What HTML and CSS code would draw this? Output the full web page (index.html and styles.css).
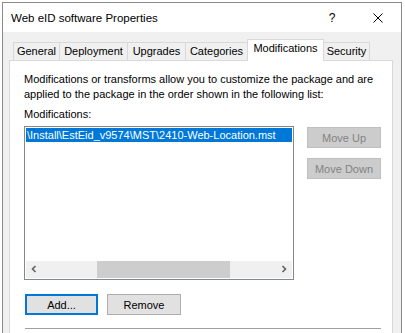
FILE: index.html
```html
<!DOCTYPE html>
<html>
<head>
<meta charset="utf-8">
<link rel="stylesheet" href="styles.css">
</head>
<body>
<div class="window">
  <div class="titlebar">
    <span class="title">Web eID software Properties</span>
    <span class="capbtn help">?</span>
    <span class="capbtn close"><svg width="10" height="10" viewBox="0 0 10 10"><path d="M0.5 0.5 L9.5 9.5 M9.5 0.5 L0.5 9.5" stroke="#000" stroke-width="1" fill="none"/></svg></span>
  </div>
  <div class="client">
    <div class="tabs">
      <div class="tab t-general">General</div>
      <div class="tab t-deploy">Deployment</div>
      <div class="tab t-upgr">Upgrades</div>
      <div class="tab t-cat">Categories</div>
      <div class="tab selected t-mod">Modifications</div>
      <div class="tab t-sec">Security</div>
    </div>
    <div class="panel">
      <p class="desc">Modifications or transforms allow you to customize the package and are<br>applied to the package in the order shown in the following list:</p>
      <div class="label">Modifications:</div>
      <div class="listrow">
        <div class="listbox">
          <div class="items">
            <div class="item selected">\Install\EstEid_v9574\MST\2410-Web-Location.mst</div>
          </div>
          <div class="hscroll">
            <div class="arrow"><svg width="17" height="17" viewBox="0 0 17 17"><polyline points="9.5,5 6.5,8 9.5,11" stroke="#606060" stroke-width="1.6" fill="none"/></svg></div>
            <div class="track"><div class="thumb"></div></div>
            <div class="arrow"><svg width="17" height="17" viewBox="0 0 17 17"><polyline points="7.5,5 10.5,8 7.5,11" stroke="#606060" stroke-width="1.6" fill="none"/></svg></div>
          </div>
        </div>
        <div class="sidebtns">
          <button class="btn disabled" disabled>Move Up</button>
          <button class="btn disabled second" disabled>Move Down</button>
        </div>
      </div>
      <div class="btnrow">
        <button class="btn default">Add...</button>
        <button class="btn remove">Remove</button>
      </div>
      <div class="sep"></div>
    </div>
  </div>
</div>
</body>
</html>
```

FILE: styles.css
```css
html, body {
  margin: 0;
  padding: 0;
  background: #ffffff;
  overflow: hidden;
}
body {
  font-family: "Liberation Sans", Arial, sans-serif;
  font-size: 11px;
  color: #000;
}
.window {
  margin: 2px 0 0 2px;
  width: 400px;
  height: 340px;
  box-sizing: border-box;
  border: 1px solid #8a8a8a;
  border-bottom: none;
  background: #f0f0f0;
}
.titlebar {
  height: 29px;
  background: #ffffff;
  display: flex;
  align-items: center;
}
.title {
  padding-left: 8px;
  font-size: 11.5px;
  flex: 1;
}
.capbtn {
  width: 46px;
  height: 29px;
  display: flex;
  align-items: center;
  justify-content: center;
  font-size: 12px;
}
.client {
  padding: 7px 8px 0 6px;
}
.tabs {
  display: flex;
  align-items: flex-end;
  height: 21px;
  padding-left: 4px;
  position: relative;
  z-index: 2;
}
.tab {
  box-sizing: border-box;
  height: 18px;
  border-top: 1px solid #d9d9d9;
  border-left: 1px solid #d9d9d9;
  background: #f0f0f0;
  padding-top: 2px;
  line-height: 13px;
  text-align: center;
  white-space: nowrap;
}
.t-general { width: 46px; }
.t-deploy { width: 68px; }
.t-upgr { width: 58px; }
.t-cat { width: 62px; }
.t-mod { width: 77px; }
.t-sec { width: 46px; border-left: none; border-right: 1px solid #d9d9d9; }
.tab.selected {
  height: 22px;
  margin-bottom: -1px;
  background: #ffffff;
  border-right: 1px solid #d9d9d9;
  padding-top: 2px;
}
.panel {
  box-sizing: border-box;
  width: 384px;
  height: 320px;
  background: #ffffff;
  border: 1px solid #d9d9d9;
  padding: 11px 0 0 14px;
}
.desc {
  margin: 0;
  line-height: 15px;
}
.label {
  margin-top: 5px;
  line-height: 15px;
}
.listrow {
  margin-top: 4px;
  display: flex;
  align-items: flex-start;
}
.listbox {
  box-sizing: border-box;
  width: 270px;
  height: 154px;
  border: 1px solid #828790;
  padding: 1px;
  display: flex;
  flex-direction: column;
}
.items {
  flex: 1;
}
.item {
  height: 14px;
  line-height: 14px;
  padding-left: 1px;
  white-space: nowrap;
}
.item.selected {
  background: #0078d7;
  color: #ffffff;
}
.hscroll {
  height: 17px;
  display: flex;
  background: #f0f0f0;
}
.arrow {
  width: 17px;
  height: 17px;
}
.arrow svg { display: block; }
.track {
  flex: 1;
}
.thumb {
  margin-left: 54px;
  width: 133px;
  height: 17px;
  background: #cdcdcd;
}
.sidebtns {
  margin-left: 13px;
  display: flex;
  flex-direction: column;
}
.btn {
  box-sizing: border-box;
  width: 74px;
  height: 21px;
  margin: 0;
  padding: 0;
  font-family: "Liberation Sans", Arial, sans-serif;
  font-size: 11px;
  color: #000;
  background: #e1e1e1;
  border: 1px solid #adadad;
  border-radius: 0;
}
.btn.disabled {
  margin-top: 1px;
  background: #cccccc;
  border-color: #bfbfbf;
  color: #838383;
}
.btn.disabled.second {
  margin-top: 10px;
}
.btnrow {
  margin-top: 14px;
  display: flex;
  padding-left: 1px;
}
.btn.default {
  width: 73px;
  border: 2px solid #0078d7;
}
.btn.remove {
  margin-left: 9px;
}
.sep {
  margin: 13px 0 0 1px;
  width: 356px;
  height: 1px;
  background: #a0a0a0;
}
```
